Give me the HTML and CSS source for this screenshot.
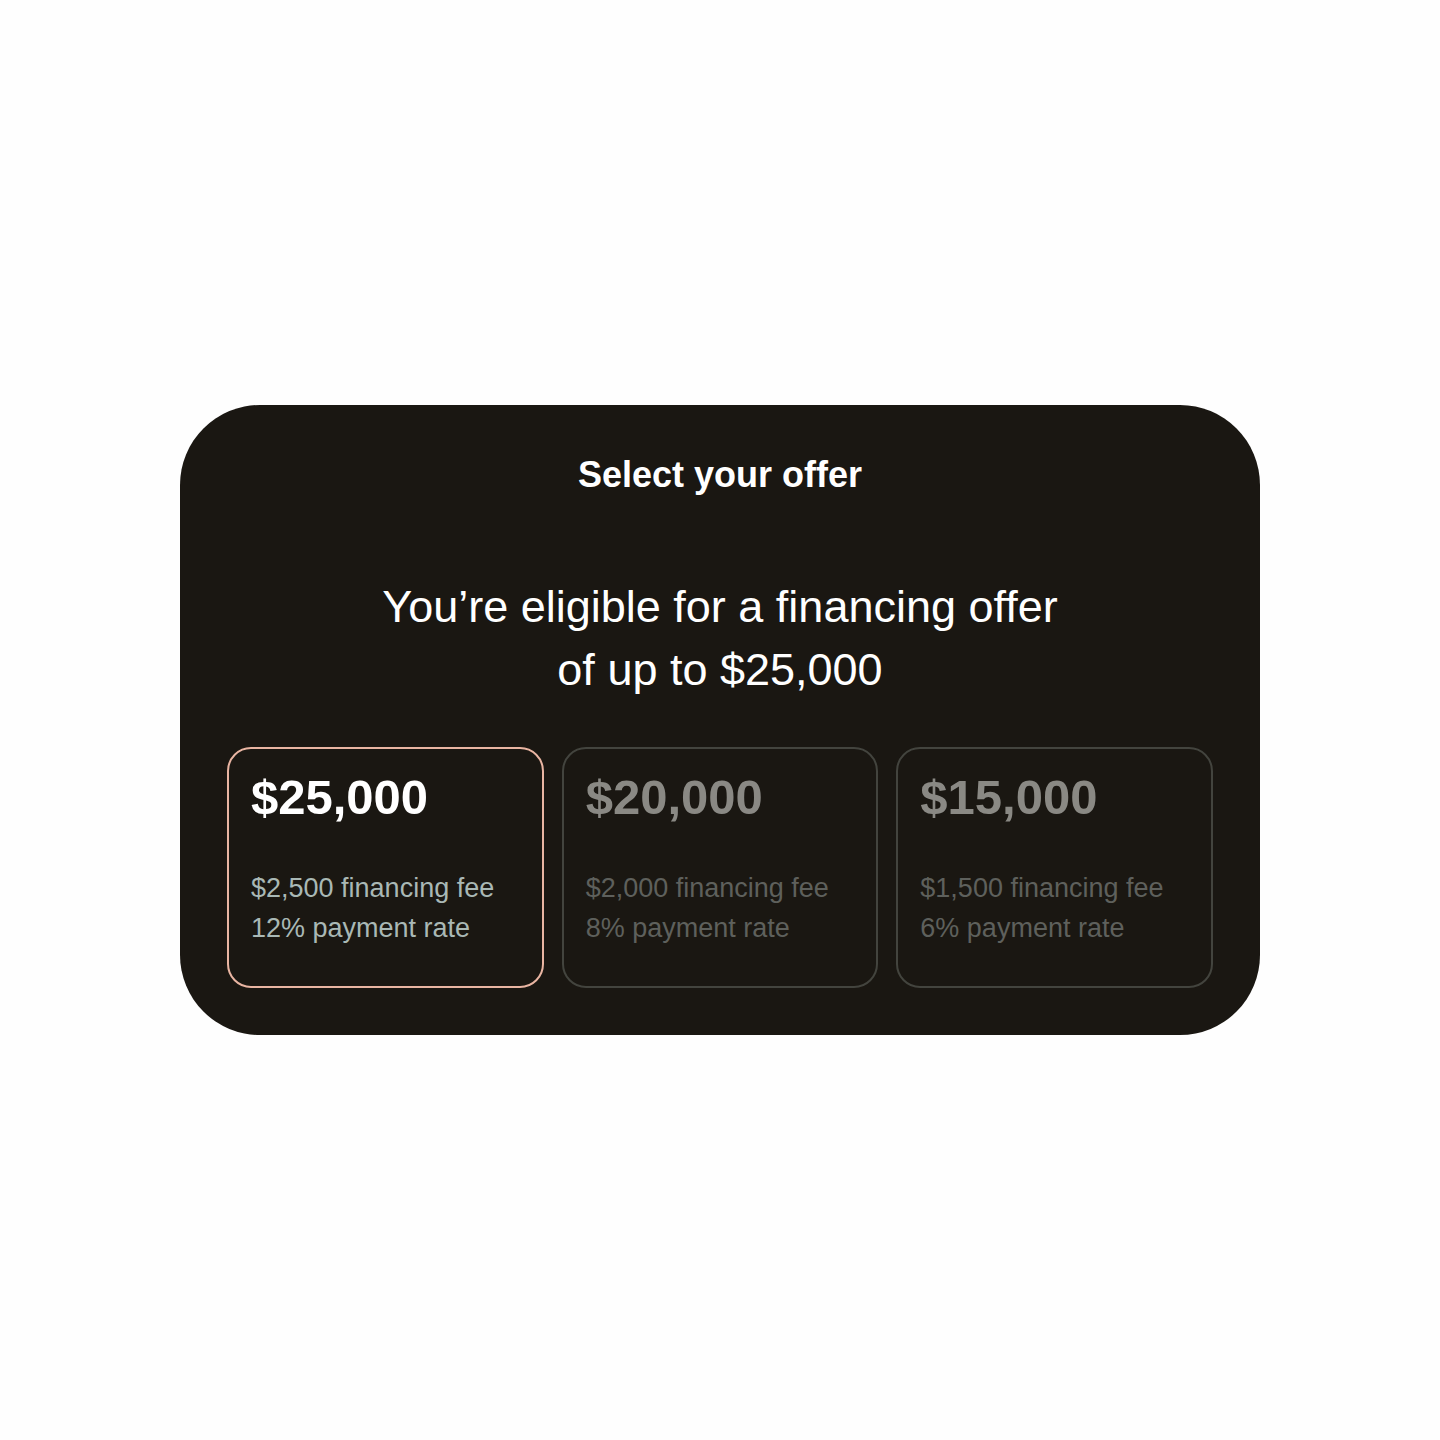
FILE: index.html
```html
<!DOCTYPE html>
<html lang="en">
<head>
  <meta charset="UTF-8">
  <meta name="viewport" content="width=device-width, initial-scale=1.0">
  <title>Select your offer</title>
  <link rel="stylesheet" href="styles.css">
</head>
<body>
  <!-- offer panel -->
  <div class="panel">
    <h2 class="title">Select your offer</h2>
    <p class="headline">You’re eligible for a financing offer<br>of up to $25,000</p>

    <div class="offers">
      <div class="offer selected">
        <div class="amount">$25,000</div>
        <div class="details">
          <div>$2,500 financing fee</div>
          <div>12% payment rate</div>
        </div>
      </div>
      <div class="offer">
        <div class="amount">$20,000</div>
        <div class="details">
          <div>$2,000 financing fee</div>
          <div>8% payment rate</div>
        </div>
      </div>
      <div class="offer">
        <div class="amount">$15,000</div>
        <div class="details">
          <div>$1,500 financing fee</div>
          <div>6% payment rate</div>
        </div>
      </div>
    </div>
  </div>
</body>
</html>
```

FILE: styles.css
```css
/* page */
body {
  margin: 0;
  min-height: 1440px;
  display: flex;
  align-items: center;
  justify-content: center;
  background-color: #fefefe;
  font-family: "Liberation Sans", Arial, sans-serif;
}
/* dark panel */
.panel {
  width: 1080px;
  height: 630px;
  box-sizing: border-box;
  padding: 48px 47px 47px;
  background-color: #1a1712;
  border-radius: 80px;
  color: #ffffff;
  text-align: center;
}
.title {
  margin: 0;
  font-size: 36px;
  line-height: 44px;
  font-weight: bold;
}
.headline {
  margin: 78px 0 0;
  font-size: 45px;
  line-height: 63px;
  font-weight: normal;
}
/* offer cards */
.offers {
  display: grid;
  grid-template-columns: repeat(3, 1fr);
  gap: 18px;
  margin-top: 46px;
  text-align: left;
}
.offer {
  height: 241px;
  box-sizing: border-box;
  padding: 22px 22px 0;
  border: 2px solid #43443e;
  border-radius: 24px;
}
.amount {
  font-size: 49px;
  line-height: 52px;
  font-weight: bold;
  color: #8a8984;
}
.details {
  margin-top: 45px;
  font-size: 27px;
  line-height: 40px;
  color: #5e605c;
}
.offer.selected {
  border-color: #e9b5a2;
}
.offer.selected .amount {
  color: #ffffff;
}
.offer.selected .details {
  color: #a9b8b5;
}
```
